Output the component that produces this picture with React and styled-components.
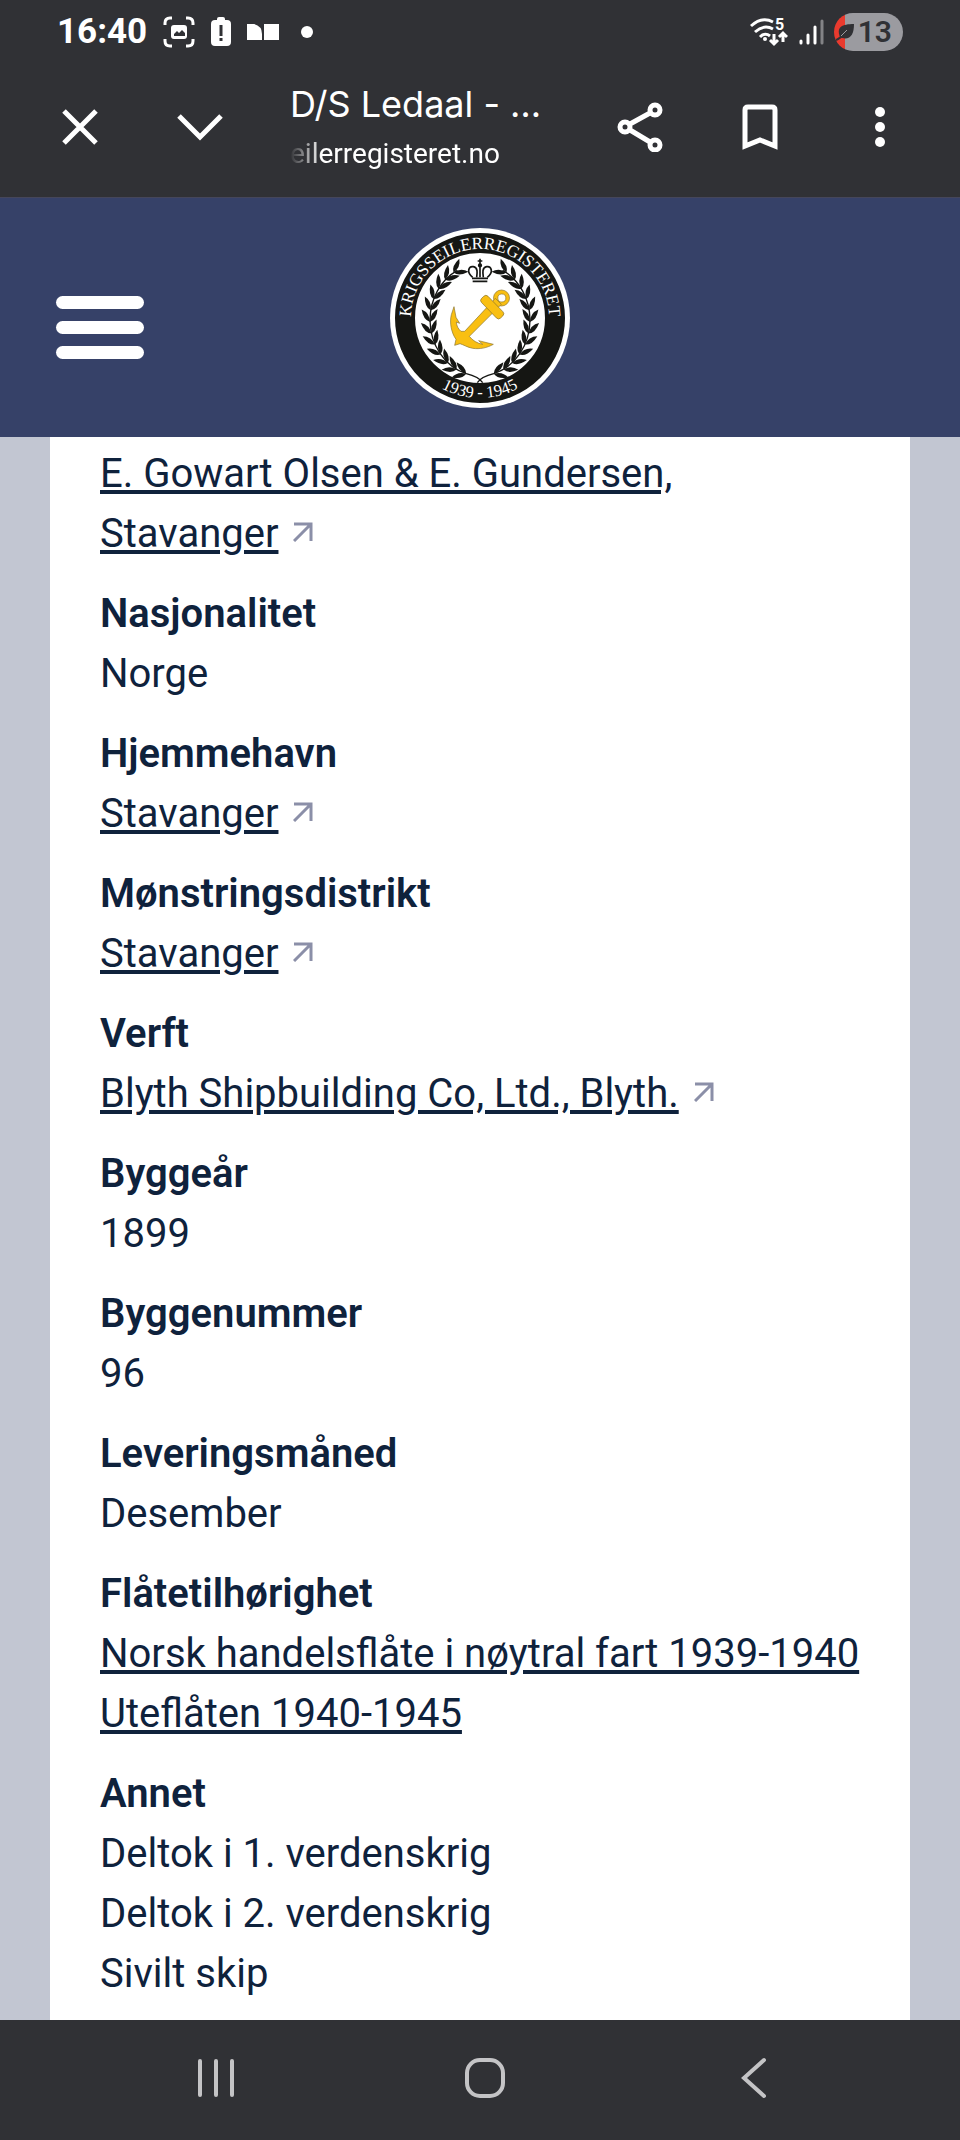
import React from "react";
import styled, { createGlobalStyle } from "styled-components";

const GlobalStyle = createGlobalStyle`
  * {
    box-sizing: border-box;
  }

  body {
    margin: 0;
    background-color: #303135;
    font-family: Roboto, "Liberation Sans", sans-serif;
  }
`;

const Screen = styled.div`
  display: flex;
  flex-direction: column;
  min-height: 100vh;
`;

const StatusBar = styled.div`
  display: flex;
  align-items: center;
  justify-content: space-between;
  height: 64px;
  padding: 0 57px;
  color: #fff;
`;

const StatusGroup = styled.div`
  display: flex;
  align-items: center;
  gap: ${(props) => props.$gap}px;

  svg {
    display: block;
  }
`;

const Clock = styled.time`
  font-size: 35px;
  line-height: 40px;
  font-weight: 700;
`;

const Battery = styled.div`
  display: flex;
  align-items: center;
  justify-content: flex-end;
  gap: 4px;
  width: 69px;
  height: 38px;
  padding-right: 11px;
  border-radius: 19px;
  background: linear-gradient(to right, #ea3a2e 11px, #9b9ba0 11px);
  color: #303135;
  font-size: 30px;
  line-height: 38px;
  font-weight: 600;
`;

const Toolbar = styled.div`
  display: flex;
  align-items: center;
  height: 134px;
  padding: 0 20px 8px;
  border-bottom: 1px solid #45465a;
  color: #fff;
`;

const ToolButton = styled.button`
  display: flex;
  align-items: center;
  justify-content: center;
  flex: none;
  width: 120px;
  height: 96px;
  padding: 0;
  border: 0;
  background: none;
  color: inherit;
`;

const PageInfo = styled.div`
  flex: 1;
  min-width: 0;
  margin-left: 30px;
  padding-top: 6px;
`;

const PageTitle = styled.div`
  font-family: Inter, Roboto, sans-serif;
  font-size: 36px;
  line-height: 48px;
  white-space: nowrap;
`;

const PageUrl = styled.div`
  font-size: 28px;
  line-height: 52px;
  white-space: nowrap;
  mask-image: linear-gradient(to right, transparent, #000 32px);
`;

const SiteHeader = styled.header`
  display: grid;
  grid-template-columns: 1fr auto 1fr;
  align-items: center;
  height: 239px;
  padding: 0 56px;
  background-color: #364168;
`;

const MenuButton = styled.button`
  display: flex;
  flex-direction: column;
  gap: 12px;
  width: 88px;
  margin-top: 20px;
  padding: 0;
  border: 0;
  background: none;

  span {
    height: 13px;
    border-radius: 7px;
    background-color: #fff;
  }
`;

const LogoLink = styled.a`
  display: block;

  svg {
    display: block;
  }
`;

const Content = styled.main`
  flex: 1;
  padding: 0 50px;
  background-color: #c2c6d2;
`;

const Card = styled.dl`
  display: flex;
  flex-direction: column;
  gap: 20px;
  height: 100%;
  margin: 0;
  padding: 7px 50px 16px;
  background-color: #fff;
  color: #0f223c;
  font-size: 40px;
  line-height: 60px;
`;

const Term = styled.dt`
  font-weight: 600;
`;

const Value = styled.dd`
  margin: 0;
`;

const ValueLink = styled.a`
  color: inherit;
  text-decoration-thickness: 4px;
  text-underline-offset: 3px;
`;

const Arrow = styled.svg`
  margin-left: 15px;
  vertical-align: 5px;
`;

const NavBar = styled.nav`
  display: flex;
  height: 120px;
  padding: 0 72px 4px 82px;
  background-color: #303135;
`;

const NavButton = styled.button`
  display: flex;
  flex: 1;
  align-items: center;
  justify-content: center;
  padding: 0;
  border: 0;
  background: none;
  color: #c4c4c6;
`;

const fields = [
  { values: [{ text: "E. Gowart Olsen & E. Gundersen, Stavanger", link: true, arrow: true }] },
  { label: "Nasjonalitet", values: [{ text: "Norge" }] },
  { label: "Hjemmehavn", values: [{ text: "Stavanger", link: true, arrow: true }] },
  { label: "Mønstringsdistrikt", values: [{ text: "Stavanger", link: true, arrow: true }] },
  { label: "Verft", values: [{ text: "Blyth Shipbuilding Co, Ltd., Blyth.", link: true, arrow: true }] },
  { label: "Byggeår", values: [{ text: "1899" }] },
  { label: "Byggenummer", values: [{ text: "96" }] },
  { label: "Leveringsmåned", values: [{ text: "Desember" }] },
  {
    label: "Flåtetilhørighet",
    values: [
      { text: "Norsk handelsflåte i nøytral fart 1939-1940", link: true },
      { text: "Uteflåten 1940-1945", link: true },
    ],
  },
  {
    label: "Annet",
    values: [
      { text: "Deltok i 1. verdenskrig" },
      { text: "Deltok i 2. verdenskrig" },
      { text: "Sivilt skip" },
    ],
  },
];

// leaves sit in pairs along one side of the wreath, from the stem up
const leaves = Array.from({ length: 12 }, (_, i) => {
  const t = ((16 + i * 12) * Math.PI) / 180;
  const x = 300 - 150 * Math.sin(t);
  const y = 312 + 168 * Math.cos(t);
  const angle = (Math.atan2(-168 * Math.sin(t), -150 * Math.cos(t)) * 180) / Math.PI;
  return { x, y, angle };
});

function Branch() {
  return (
    <g fill="#151613">
      <path
        d="M308 500Q296 482 259 473A150 168 0 0 1 150 312A150 168 0 0 1 232 163"
        fill="none"
        stroke="#151613"
        strokeWidth="4"
      />
      {leaves.map(({ x, y, angle }) => (
        <g key={angle} transform={`translate(${x} ${y}) rotate(${angle})`}>
          <path d="M0 0Q6 -20 38 -24Q27 0 0 0Z" />
          <path d="M0 0Q6 20 38 24Q27 0 0 0Z" />
        </g>
      ))}
    </g>
  );
}

function Logo() {
  return (
    <svg width="180" height="180" viewBox="30 36 540 540" role="img" aria-label="Krigsseilerregisteret">
      <circle cx="300" cy="306" r="270" fill="#fff" />
      <circle cx="300" cy="306" r="225" fill="none" stroke="#151613" strokeWidth="60" />
      <defs>
        <path id="ring-top" d="M93 320L93 306A207 207 0 0 1 507 306L507 320" />
        <path id="ring-bottom" d="M60 306A240 240 0 0 0 540 306" />
      </defs>
      <g fill="#fff" fontFamily="'Liberation Serif', serif" textAnchor="middle">
        <text fontSize="52">
          <textPath href="#ring-top" startOffset="50%">
            KRIGSSEILERREGISTERET
          </textPath>
        </text>
        <text fontSize="50">
          <textPath href="#ring-bottom" startOffset="50%">
            1939 - 1945
          </textPath>
        </text>
      </g>
      <Branch />
      <g transform="translate(600 0) scale(-1 1)">
        <Branch />
      </g>
      <g fill="none" stroke="#151613" strokeWidth="5">
        <path d="M300 128V144M293 135H307" />
        <circle cx="300" cy="148" r="4" fill="#151613" />
        <path d="M278 184C258 168 266 150 280 152C294 154 292 170 290 184M322 184C342 168 334 150 320 152C306 154 308 170 310 184M300 152V184" />
        <path d="M276 187H324M278 196H322" />
      </g>
      <g fill="#f9bf12" stroke="#8a7430" strokeWidth="2">
        <path
          fillRule="evenodd"
          d="M365 222A24 24 0 1 1 364 270A24 24 0 1 1 365 222ZM365 234A12 12 0 1 0 366 258A12 12 0 1 0 365 234Z"
        />
        <path d="M346 247L364 265L268 361C278 374 292 382 308 385L296 374L340 385C320 396 300 400 278 397C262 394 250 386 240 383L224 388L228 370C214 350 208 320 214 296L222 272L228 304L239 322L229 318C230 330 234 338 243 346L254 346Z" />
        <rect x="296" y="260" width="82" height="27" rx="9" transform="rotate(46 337 273)" />
      </g>
    </svg>
  );
}

function ExternalArrow() {
  return (
    <Arrow width="20" height="20" viewBox="0 0 20 20" fill="none" stroke="#8b8fa8" strokeWidth="3" aria-hidden="true">
      <path d="M1 2H18V19M18 2L1 19" />
    </Arrow>
  );
}

function PhoneStatus() {
  return (
    <StatusBar>
      <StatusGroup $gap={16}>
        <Clock>16:40</Clock>
        <svg width="32" height="32" viewBox="0 0 32 32" fill="none" stroke="currentColor" strokeWidth="3">
          <path d="M2 9V7Q2 2 7 2H9M23 2H25Q30 2 30 7V9M30 23V25Q30 30 25 30H23M9 30H7Q2 30 2 25V23" />
          <rect x="8" y="9" width="16" height="14" rx="3" fill="currentColor" stroke="none" />
          <path d="M11 20V18L14 15L16 17L19 14L22 17V20Z" fill="#303135" stroke="none" />
        </svg>
        <svg width="20" height="30" viewBox="0 0 20 30">
          <path
            fill="currentColor"
            d="M6 3V2Q6 0 8 0H12Q14 0 14 2V3H16Q20 3 20 7V25Q20 29 16 29H4Q0 29 0 25V7Q0 3 4 3Z"
          />
          <path d="M10 8V19M10 21V24" stroke="#303135" strokeWidth="3" />
        </svg>
        <svg width="32" height="16" viewBox="0 0 32 16" fill="currentColor">
          <path d="M0 0H7Q15 2 15 10V16H0ZM17 0H32V16H17Z" />
        </svg>
        <svg width="24" height="12" viewBox="0 0 24 12" fill="currentColor">
          <circle cx="12" cy="6" r="6" />
        </svg>
      </StatusGroup>
      <StatusGroup $gap={10}>
        <svg width="38" height="40" viewBox="0 -5 38 40" fill="none" stroke="currentColor" strokeWidth="3">
          <path d="M1 9Q12 -1 23 5M5 15Q14 7 23 12M10 20Q15 15 20 19" />
          <circle cx="15" cy="22" r="2" fill="currentColor" stroke="none" />
          <path d="M24 17V27M20 23L24 27L28 23M33 25V16M29 20L33 16L37 20" />
          <text x="25" y="13" fontSize="16" fontWeight="700" fill="currentColor" stroke="none">
            5
          </text>
        </svg>
        <svg width="26" height="28" viewBox="0 0 26 28" stroke="currentColor" strokeWidth="3" strokeLinecap="round">
          <path d="M3 23V25M10 17V25M17 9V25" />
          <path d="M24 3V25" opacity="0.4" />
        </svg>
        <Battery>
          <svg width="18" height="18" viewBox="0 0 18 18">
            <path d="M4 14C0 4 6 1 18 1C18 12 14 17 6 15" fill="#303135" />
            <path d="M0 17Q5 15 11 8" fill="none" stroke="#303135" strokeWidth="2" />
            <path d="M5 13L11 7" stroke="#9b9ba0" strokeWidth="1" />
          </svg>
          13
        </Battery>
      </StatusGroup>
    </StatusBar>
  );
}

function BrowserBar() {
  return (
    <Toolbar>
      <ToolButton aria-label="Lukk">
        <svg width="36" height="36" viewBox="0 0 36 36" stroke="currentColor" strokeWidth="5">
          <path d="M2 2L34 34M34 2L2 34" />
        </svg>
      </ToolButton>
      <ToolButton aria-label="Minimer">
        <svg width="46" height="28" viewBox="0 0 46 28" fill="none" stroke="currentColor" strokeWidth="5">
          <path d="M2 3L23 24L44 3" />
        </svg>
      </ToolButton>
      <PageInfo>
        <PageTitle>D/S Ledaal - …</PageTitle>
        <PageUrl>eilerregisteret.no</PageUrl>
      </PageInfo>
      <ToolButton aria-label="Del">
        <svg width="46" height="50" viewBox="0 0 46 50" fill="none" stroke="currentColor" strokeWidth="5">
          <circle cx="38" cy="8" r="5" />
          <circle cx="8" cy="25" r="5" />
          <circle cx="38" cy="43" r="5" />
          <path d="M33 11L13 22M33 40L13 28" />
        </svg>
      </ToolButton>
      <ToolButton aria-label="Bokmerke">
        <svg width="36" height="46" viewBox="0 0 36 46" fill="none" stroke="currentColor" strokeWidth="5">
          <path d="M3 42V6Q3 3 6 3H30Q33 3 33 6V42L18 36Z" />
        </svg>
      </ToolButton>
      <ToolButton aria-label="Mer">
        <svg width="12" height="42" viewBox="0 0 12 42" fill="currentColor">
          <circle cx="6" cy="6" r="5" />
          <circle cx="6" cy="21" r="5" />
          <circle cx="6" cy="36" r="5" />
        </svg>
      </ToolButton>
    </Toolbar>
  );
}

export default function App() {
  return (
    <Screen>
      <GlobalStyle />
      <PhoneStatus />
      <BrowserBar />
      <SiteHeader>
        <MenuButton aria-label="Meny">
          <span />
          <span />
          <span />
        </MenuButton>
        <LogoLink href="#">
          <Logo />
        </LogoLink>
      </SiteHeader>
      <Content>
        <Card>
          {fields.map((field, i) => (
            <div key={i}>
              {field.label && <Term>{field.label}</Term>}
              {field.values.map((value) => (
                <Value key={value.text}>
                  {value.link ? <ValueLink href="#">{value.text}</ValueLink> : value.text}
                  {value.arrow && <ExternalArrow />}
                </Value>
              ))}
            </div>
          ))}
        </Card>
      </Content>
      <NavBar>
        <NavButton aria-label="Nylige apper">
          <svg width="36" height="40" viewBox="0 0 36 40" stroke="currentColor" strokeWidth="4" strokeLinecap="round">
            <path d="M2 3V37M18 3V37M34 3V37" />
          </svg>
        </NavButton>
        <NavButton aria-label="Hjem">
          <svg width="42" height="42" viewBox="0 0 42 42" fill="none" stroke="currentColor" strokeWidth="4">
            <rect x="3" y="3" width="36" height="36" rx="13" />
          </svg>
        </NavButton>
        <NavButton aria-label="Tilbake">
          <svg width="26" height="42" viewBox="0 0 26 42" fill="none" stroke="currentColor" strokeWidth="4" strokeLinecap="round">
            <path d="M23 3L3 21L23 39" />
          </svg>
        </NavButton>
      </NavBar>
    </Screen>
  );
}
